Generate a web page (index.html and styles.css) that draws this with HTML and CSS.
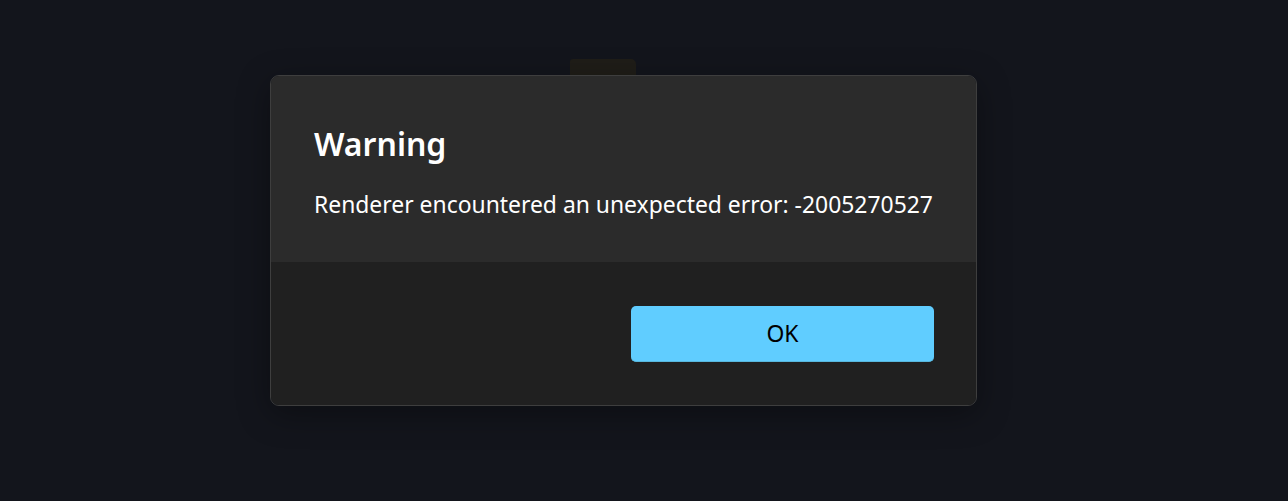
FILE: index.html
```html
<!DOCTYPE html>
<html lang="en">

<head>
    <meta charset="UTF-8">
    <title>Warning</title>
    <link rel="stylesheet" href="styles.css">
</head>

<body>
    <div class="desktop-folder"></div>
    <div class="dialog">
        <div class="dialog-content">
            <h2>Warning</h2>
            <p>Renderer encountered an unexpected error: -2005270527</p>
        </div>
        <div class="dialog-footer">
            <button class="primary">OK</button>
        </div>
    </div>
</body>

</html>
```

FILE: styles.css
```css
body {
    margin: 0;
    height: 501px;
    background-color: #13151c;
    font-family: "Noto Sans", sans-serif;
    padding: 75px 0 0 270px;
    box-sizing: border-box;
    position: relative;
    overflow: hidden;
}

.desktop-folder {
    position: absolute;
    left: 570px;
    top: 59px;
    width: 66px;
    height: 20px;
    background-color: #1f1d18;
    border-radius: 3px 5px 0 0;
}

.dialog {
    position: relative;
    width: 707px;
    height: 331px;
    box-sizing: border-box;
    border: 1px solid #3e3e3e;
    border-radius: 9px;
    overflow: hidden;
    display: flex;
    flex-direction: column;
    box-shadow: 0 8px 32px rgba(0, 0, 0, .35);
}

.dialog-content {
    background-color: #2b2b2b;
    height: 186px;
    padding: 48px 20px 0 43px;
    box-sizing: border-box;
    color: white;
}

.dialog-content>h2 {
    margin: 0;
    font-size: 32px;
    font-weight: 600;
    line-height: 40px;
}

.dialog-content>p {
    margin: 25px 0 0;
    font-size: 22.9px;
    line-height: 32px;
    white-space: nowrap;
}

.dialog-footer {
    flex: 1;
    background-color: #202020;
    display: flex;
    justify-content: flex-end;
    align-items: flex-start;
    padding: 44px 42px 0;
}

.primary {
    width: 303px;
    height: 56px;
    border: none;
    border-bottom: 1px solid #58b7dc;
    border-radius: 5px;
    background-color: #60cdff;
    color: #000;
    font-family: inherit;
    font-size: 22.9px;
}
```
